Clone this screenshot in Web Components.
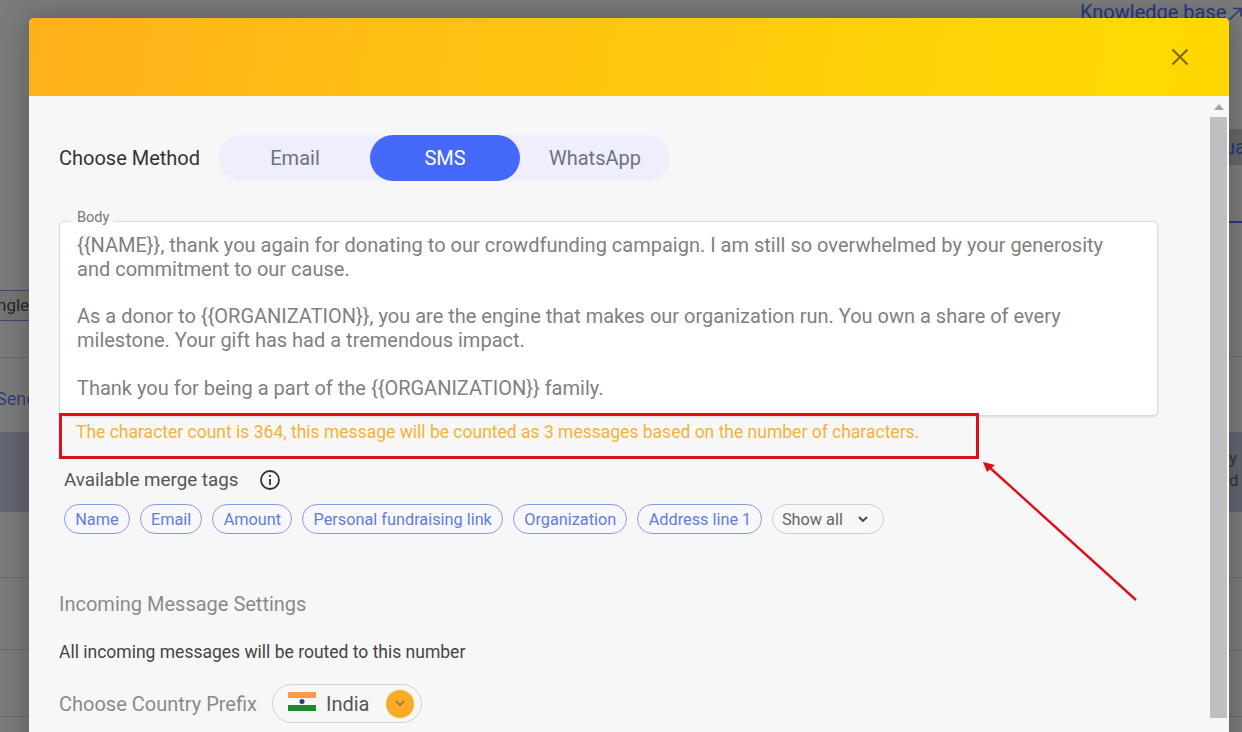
<!DOCTYPE html>
<html>
<head>
<meta charset="utf-8">
<style>
  html, body { margin: 0; height: 100%; overflow: hidden; }
  body { font-family: Roboto, "Liberation Sans", sans-serif; }
</style>
</head>
<body>
<dim-backdrop>
  <message-modal>
    <method-row></method-row>
    <body-field>{{NAME}}, thank you again for donating to our crowdfunding campaign. I am still so overwhelmed by your generosity and commitment to our cause.

As a donor to {{ORGANIZATION}}, you are the engine that makes our organization run. You own a share of every milestone. Your gift has had a tremendous impact.

Thank you for being a part of the {{ORGANIZATION}} family.</body-field>
    <char-note>The character count is 364, this message will be counted as 3 messages based on the number of characters.</char-note>
    <merge-tags></merge-tags>
    <incoming-settings></incoming-settings>
  </message-modal>
</dim-backdrop>

<script>
class DimBackdrop extends HTMLElement {
  constructor() {
    super();
    this.attachShadow({ mode: "open" }).innerHTML = `
      <style>
        :host { display: block; position: relative; width: 1242px; height: 732px; overflow: hidden; background: #7b7b7b; padding: 18px 13px 0 29px; box-sizing: border-box; }
        .bit { position: absolute; color: #2f3a78; white-space: nowrap; line-height: 24px; }
        .band { position: absolute; }
        .line { position: absolute; height: 1px; background: #696969; }
        .left { left: 0; width: 29px; }
        .right { left: 1229px; width: 13px; }
        .kb { left: 1080px; top: 0; font-size: 20px; color: #2a3580; }
        .arrow { position: absolute; left: 1228px; top: 7px; }
        .ngle { left: -3px; top: 293px; font-size: 17px; color: #262626; }
        .send { left: -4px; top: 387px; font-size: 18px; color: #333e7a; }
        .ua { left: 1224px; top: 135px; font-size: 20px; color: #2a3580; }
        .yd { left: 1229px; top: 447px; font-size: 17px; line-height: 22px; color: #333; white-space: pre; }
      </style>
      <div class="band left" style="top:290px;height:31px;background:#747474"></div>
      <div class="band left" style="top:432px;height:80px;background:#62646f"></div>
      <div class="band right" style="top:129px;height:36px;background:#666"></div>
      <div class="band right" style="top:432px;height:80px;background:#62646f"></div>
      <div class="line left" style="top:290px;background:#3e4578"></div>
      <div class="line left" style="top:320px;background:#3e4578"></div>
      <div class="line left" style="top:357px"></div>
      <div class="line left" style="top:577px"></div>
      <div class="line left" style="top:649px"></div>
      <div class="line left" style="top:716px"></div>
      <div class="line right" style="top:221px;height:2px;background:#2a3580"></div>
      <div class="line right" style="top:356px"></div>
      <div class="line right" style="top:577px"></div>
      <div class="line right" style="top:650px"></div>
      <div class="line right" style="top:716px"></div>
      <span class="bit kb">Knowledge base</span>
      <svg class="arrow" width="14" height="14" viewBox="0 0 14 14" fill="none" stroke="#2a3580" stroke-width="1.500"><path d="M1 13 13 2M5 1.500h8v8"/></svg>
      <span class="bit ngle">ngle</span>
      <span class="bit send">Send</span>
      <span class="bit ua">ua</span>
      <span class="bit yd">y
d</span>
      <slot></slot>`;
  }
}

class MessageModal extends HTMLElement {
  constructor() {
    super();
    this.attachShadow({ mode: "open" }).innerHTML = `
      <style>
        :host { display: flex; flex-direction: column; width: 1200px; height: 760px; background: #f7f7f7; border-radius: 5px 5px 0 0; overflow: hidden; position: relative; box-shadow: 0 0 28px rgba(0,0,0,.28); }
        header { flex: none; height: 78px; background: linear-gradient(100deg, #ffb11c 0%, #ffd903 90%, #ffd800 100%); display: flex; align-items: center; justify-content: flex-end; padding-right: 39px; }
        header svg { display: block; margin-bottom: 1px; }
        .main { flex: 1; display: flex; min-height: 0; }
        .content { flex: 1; padding: 39px 51px 0 30px; min-width: 0; }
        .scroll { flex: none; width: 20px; position: relative; }
        .scroll .up { position: absolute; left: 5px; top: 8px; width: 0; height: 0; border: 5px solid transparent; border-top: 0; border-bottom: 6px solid #a3a3a3; }
        .scroll .thumb { position: absolute; left: 1px; top: 21px; width: 17px; height: 601px; background: #bfbfbf; }
      </style>
      <header>
        <svg width="20" height="20" viewBox="0 0 20 20" fill="none" stroke="#7d6a12" stroke-width="2.200"><path d="M2.500 2.500 17.500 17.500M17.500 2.500 2.500 17.500"/></svg>
      </header>
      <div class="main">
        <div class="content"><slot></slot></div>
        <div class="scroll"><div class="up"></div><div class="thumb"></div></div>
      </div>`;
  }
}

class MethodRow extends HTMLElement {
  constructor() {
    super();
    this.attachShadow({ mode: "open" }).innerHTML = `
      <style>
        :host { display: flex; align-items: center; height: 46px; }
        .label { font-size: 20px; color: #333; width: 160px; }
        .pills { display: flex; width: 451px; height: 46px; background: #eeeefc; border-radius: 23px; padding-left: 1px; box-sizing: border-box; }
        .pill { width: 150px; display: flex; align-items: center; justify-content: center; font-size: 20px; color: #6f7280; border-radius: 23px; }
        .on { background: #4569fb; color: #fff; }
      </style>
      <span class="label">Choose Method</span>
      <div class="pills">
        <span class="pill">Email</span>
        <span class="pill on">SMS</span>
        <span class="pill">WhatsApp</span>
      </div>`;
  }
}

class BodyField extends HTMLElement {
  constructor() {
    super();
    this.attachShadow({ mode: "open" }).innerHTML = `
      <style>
        :host { display: block; position: relative; margin-top: 40px; background: #fff; border: 1px solid #dcdcdc; border-radius: 5px; box-shadow: 0 1px 2px rgba(0,0,0,.12); padding: 12px 17px 14px; height: 167px; font-size: 20px; line-height: 23.800px; color: #808080; }
        .text { white-space: pre-wrap; }
        .legend { position: absolute; left: 10px; top: -14px; padding: 0 5px 0 7px; background: linear-gradient(#f7f7f7 14px, transparent 14px); font-size: 14.500px; line-height: 20px; color: #777; }
      </style>
      <span class="legend">Body</span>
      <div class="text"><slot></slot></div>`;
  }
}

class CharNote extends HTMLElement {
  constructor() {
    super();
    this.attachShadow({ mode: "open" }).innerHTML = `
      <style>
        :host { display: block; position: relative; font-size: 17.500px; line-height: 24px; color: #f3b23a; padding: 4px 17px; }
        .mark { position: absolute; left: 0; top: -3px; width: 914px; height: 40px; border: 3px solid #dc0f1b; }
        svg { position: absolute; left: 915px; top: 40px; overflow: visible; }
      </style>
      <div class="mark"></div>
      <svg width="170" height="150" viewBox="0 0 170 150" fill="none"><path d="M14 10 162 144" stroke="#dc0f1b" stroke-width="2.400"/><path d="M9 6 21 9 13 16Z" fill="#dc0f1b"/></svg>
      <slot></slot>`;
  }
}

class MergeTags extends HTMLElement {
  constructor() {
    super();
    const tags = ["Name", "Email", "Amount", "Personal fundraising link", "Organization", "Address line 1"];
    this.attachShadow({ mode: "open" }).innerHTML = `
      <style>
        :host { display: block; margin-top: 20px; padding-left: 5px; }
        .head { display: flex; align-items: center; height: 24px; font-size: 18.800px; color: #555; gap: 21px; }
        .tags { display: flex; gap: 10px; margin-top: 12px; }
        .tag { box-sizing: border-box; height: 30px; padding: 0 10.200px; border: 1.500px solid #8a9be6; border-radius: 16px; display: flex; align-items: center; font-size: 16.300px; color: #637be2; background: #f8f8fc; }
        .all { color: #666; border-color: #ccc; background: #f7f7f7; gap: 15px; padding: 0 15px 0 8.500px; }
      </style>
      <div class="head">Available merge tags
        <svg width="22" height="22" viewBox="0 0 22 22" fill="none" stroke="#333" stroke-width="1.800"><circle cx="11" cy="11" r="9"/><path d="M11 10v6M11 6v2"/></svg>
      </div>
      <div class="tags">
        ${tags.map((t) => `<span class="tag">${t}</span>`).join("")}
        <span class="tag all">Show all
          <svg width="10" height="7" viewBox="0 0 10 7" fill="none" stroke="#444" stroke-width="1.800"><path d="M1 1 5 5 9 1"/></svg>
        </span>
      </div>`;
  }
}

class IncomingSettings extends HTMLElement {
  constructor() {
    super();
    this.attachShadow({ mode: "open" }).innerHTML = `
      <style>
        :host { display: block; margin-top: 58px; }
        h3 { margin: 0; font-weight: 400; font-size: 20px; line-height: 24px; color: #8a8a8a; }
        p { margin: 24px 0 0; font-size: 17.500px; line-height: 24px; color: #444; }
        .row { display: flex; align-items: center; margin-top: 20px; gap: 15px; }
        .row > span { font-size: 20px; color: #8a8a8a; }
        .select { display: flex; align-items: center; box-sizing: border-box; width: 150px; height: 39px; border: 1.500px solid #d3d3d3; border-radius: 20px; padding-left: 15px; font-size: 20px; color: #555; gap: 10px; }
        .select > svg { margin-bottom: 5px; }
        .btn { width: 28px; height: 28px; border-radius: 50%; background: #fbab26; display: flex; align-items: center; justify-content: center; margin-left: 7px; }
      </style>
      <h3>Incoming Message Settings</h3>
      <p>All incoming messages will be routed to this number</p>
      <div class="row">
        <span>Choose Country Prefix</span>
        <div class="select">
          <svg width="28" height="19" viewBox="0 0 28 19"><rect width="28" height="6" fill="#f79a45"/><rect y="6" width="28" height="7" fill="#f7f7f7"/><rect y="13" width="28" height="6" fill="#1f8a2c"/><circle cx="14" cy="9.500" r="2.500" fill="#2b3a80"/></svg>
          India
          <div class="btn"><svg width="10" height="7" viewBox="0 0 10 7" fill="none" stroke="#8a6a20" stroke-width="1.300"><path d="M1 1 5 5 9 1"/></svg></div>
        </div>
      </div>`;
  }
}

customElements.define("dim-backdrop", DimBackdrop);
customElements.define("message-modal", MessageModal);
customElements.define("method-row", MethodRow);
customElements.define("body-field", BodyField);
customElements.define("char-note", CharNote);
customElements.define("merge-tags", MergeTags);
customElements.define("incoming-settings", IncomingSettings);
</script>
</body>
</html>
